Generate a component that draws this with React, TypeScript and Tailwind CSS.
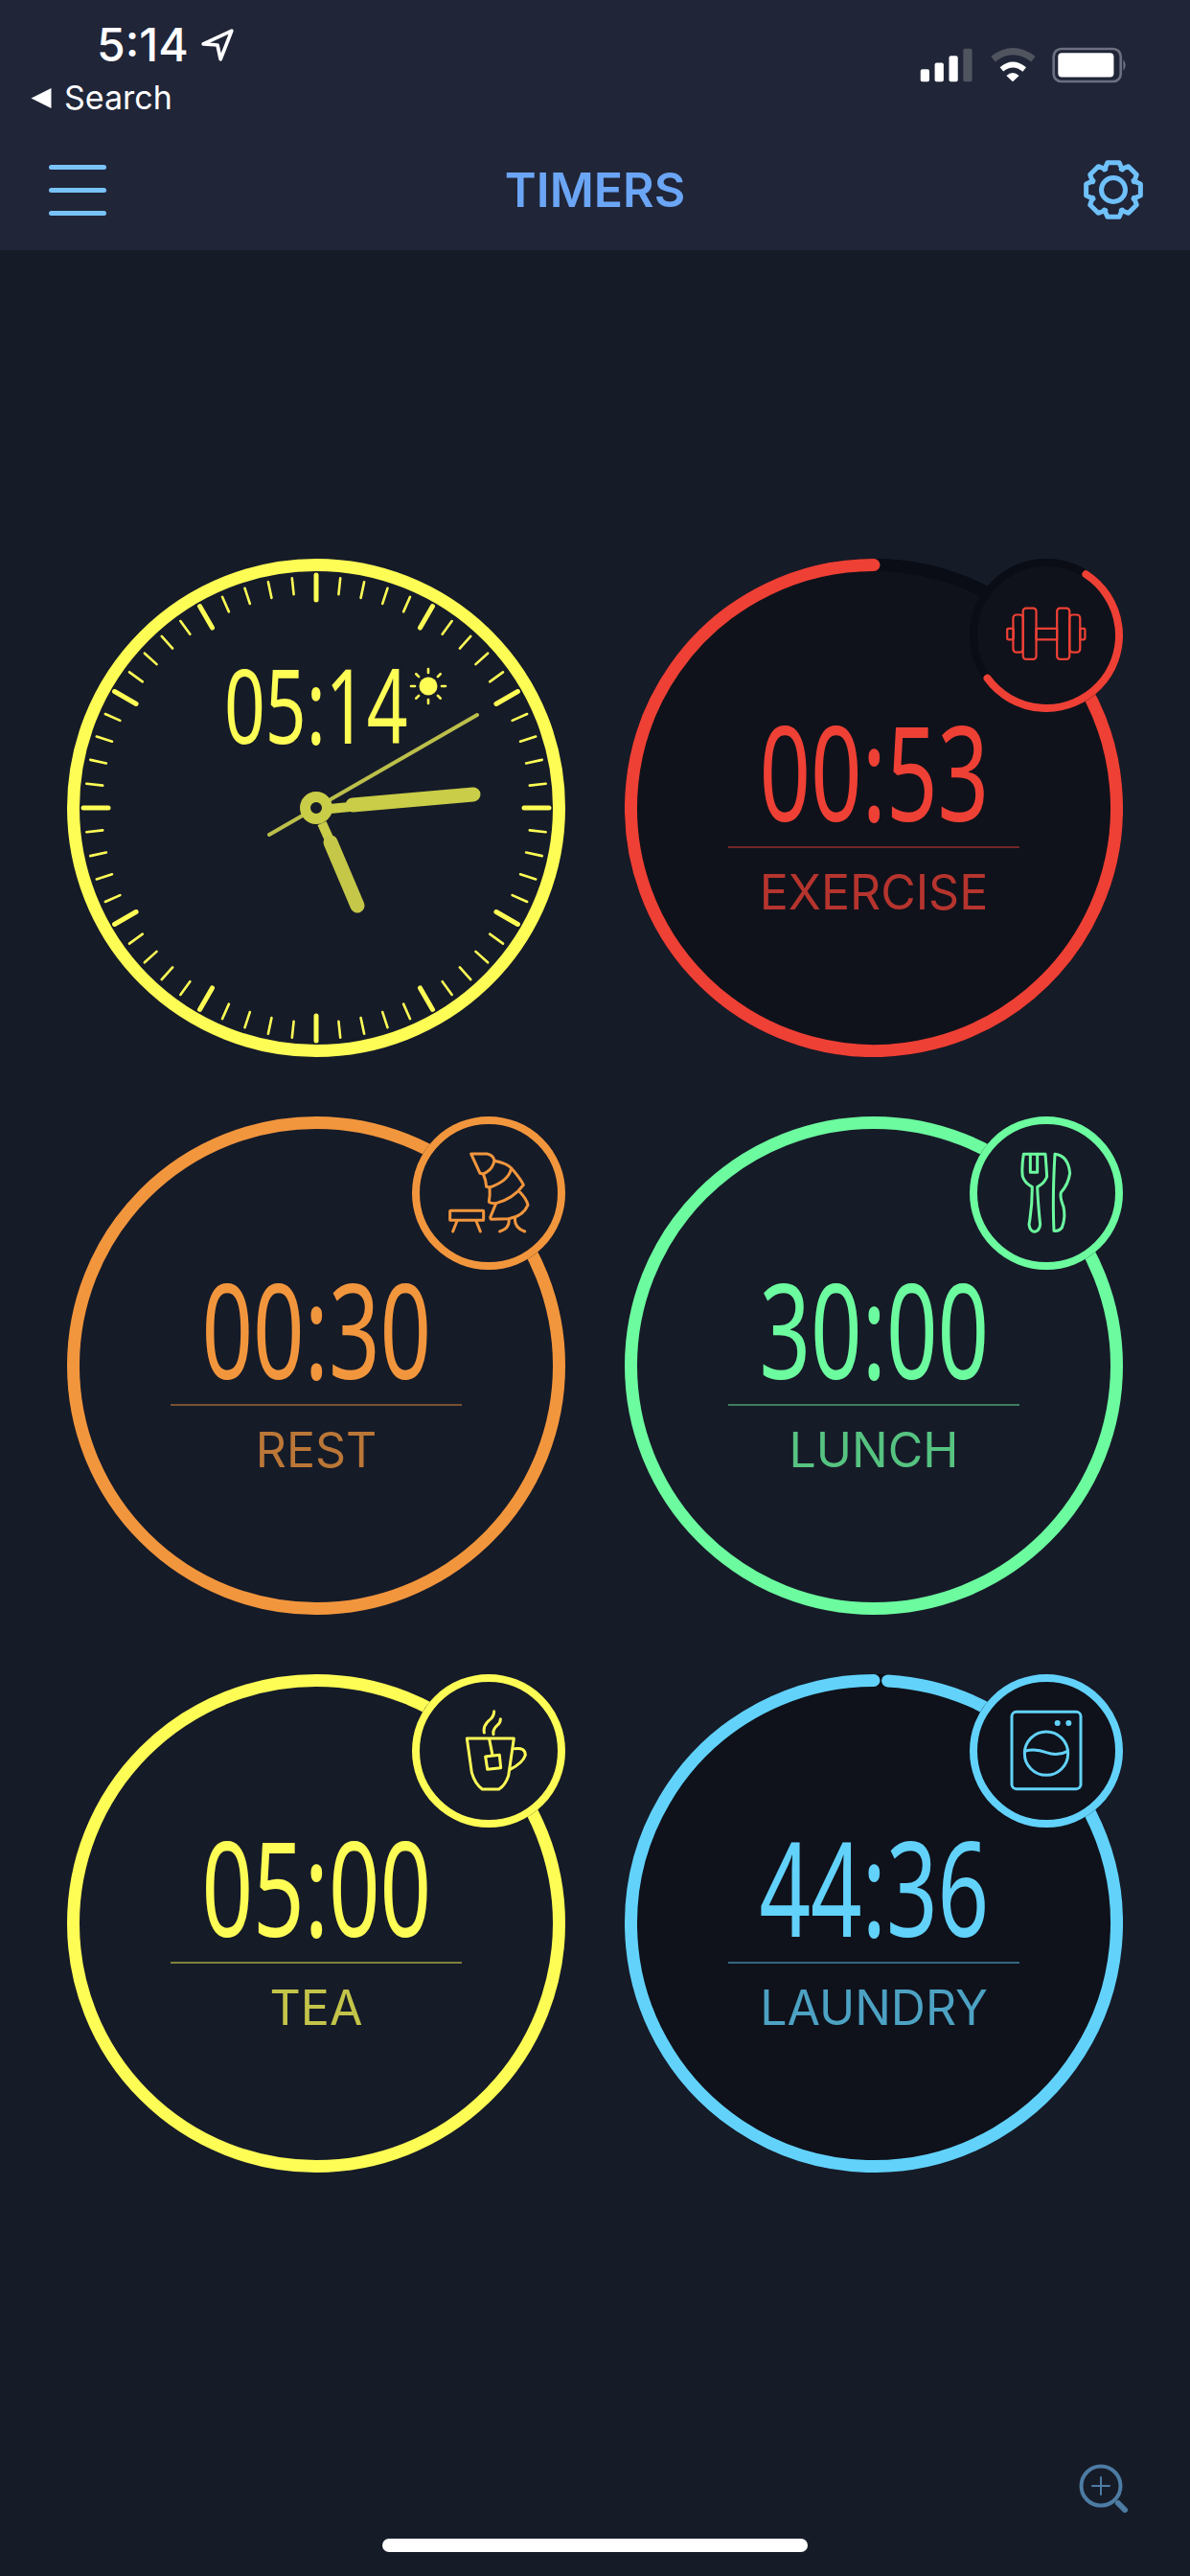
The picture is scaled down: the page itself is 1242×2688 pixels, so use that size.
import React from 'react';

const SIZE = 520;
const C = SIZE / 2;
const STROKE = 13;
const R = C - STROKE / 2;

const digitFont = { fontFamily: '"Noto Sans", sans-serif' };

const timers = [
  { label: 'EXERCISE', time: '00:53', color: '#ee4035', icon: 'dumbbell', arc: [30, 360], badgeArc: [33, 234], running: true },
  { label: 'REST', time: '00:30', color: '#f2963d', icon: 'rest' },
  { label: 'LUNCH', time: '30:00', color: '#6cfb9f', icon: 'lunch' },
  { label: 'TEA', time: '05:00', color: '#fdfd55', icon: 'tea' },
  { label: 'LAUNDRY', time: '44:36', color: '#62d2fb', icon: 'laundry', arc: [3.3, 360], running: true },
];

function arcPath(cx: number, cy: number, r: number, start: number, end: number) {
  const pt = (deg: number) => {
    const a = ((deg - 90) * Math.PI) / 180;
    return `${cx + r * Math.cos(a)} ${cy + r * Math.sin(a)}`;
  };
  const large = end - start > 180 ? 1 : 0;
  return `M${pt(start)} A${r} ${r} 0 ${large} 1 ${pt(end)}`;
}

function Ring({ size, width, color, arc }: { size: number; width: number; color: string; arc?: number[] }) {
  const c = size / 2;
  const r = c - width / 2;
  return (
    <svg className="absolute inset-0" width={size} height={size} viewBox={`0 0 ${size} ${size}`} fill="none">
      {arc ? (
        <>
          <circle cx={c} cy={c} r={r} stroke="#0a0d15" strokeWidth={width} />
          <path d={arcPath(c, c, r, arc[0], arc[1])} stroke={color} strokeWidth={width} strokeLinecap="round" />
        </>
      ) : (
        <circle cx={c} cy={c} r={r} stroke={color} strokeWidth={width} />
      )}
    </svg>
  );
}

// icon paths are traced in crop coordinates, hence the odd viewBoxes
function BadgeIcon({ name }: { name: string }) {
  const common = { className: 'absolute inset-0', width: 160, height: 160, fill: 'none', stroke: 'currentColor', strokeLinejoin: 'round' as const, strokeLinecap: 'round' as const };
  if (name === 'dumbbell') {
    return (
      <svg {...common} viewBox="1080 38 465 465" strokeWidth={6.5}>
        <rect x="1194" y="250" width="19" height="33" rx="3" />
        <rect x="1212" y="208" width="30" height="114" rx="10" />
        <rect x="1242" y="188" width="40" height="155" rx="9" />
        <rect x="1282" y="250" width="63" height="33" />
        <rect x="1345" y="188" width="38" height="155" rx="9" />
        <rect x="1383" y="208" width="32" height="114" rx="10" />
        <rect x="1415" y="250" width="15" height="33" rx="3" />
      </svg>
    );
  }
  if (name === 'rest') {
    return (
      <svg {...common} viewBox="27 48 480 480" strokeWidth={9}>
        <path d="M212 165 L262 165 Q280 168 285 185 Q280 215 250 228 L240 226 Z" />
        <path d="M285 187 Q325 195 338 210 Q330 250 270 270 L260 268 Q258 245 250 228" />
        <path d="M338 210 Q365 240 376 262 Q345 305 290 320 Q270 320 268 315 Q272 295 270 270" />
        <path d="M365 285 Q385 305 390 325 Q375 360 330 368 L275 370 Q272 368 272 364 L290 320" />
        <path d="M330 368 Q335 398 302 408 M350 365 Q345 395 380 408" />
        <rect x="146" y="343" width="105" height="30" rx="2" />
        <path d="M168 375 L155 408 M228 375 L241 408" />
      </svg>
    );
  }
  if (name === 'lunch') {
    return (
      <svg {...common} viewBox="36 47 480 480" strokeWidth={9}>
        <path d="M205 165 Q198 210 202 235 Q208 255 232 268 Q232 330 222 385 Q225 408 240 408 Q255 405 257 385 Q250 320 248 268 Q272 255 278 235 Q276 200 273 165 Z" />
        <path d="M226 165 V222 H248 V165" />
        <path d="M303 165 Q345 170 350 225 Q345 260 322 285 Q318 300 330 330 Q337 365 325 395 Q315 408 300 405 Q295 300 303 165 Z" />
      </svg>
    );
  }
  if (name === 'tea') {
    return (
      <svg {...common} viewBox="28 52 480 480" strokeWidth={9}>
        <path d="M200 253 H347 L330 370 Q320 400 300 412 H248 Q225 395 215 360 Z" />
        <path d="M350 285 Q382 280 383 305 Q375 330 335 350" />
        <path d="M270 255 L280 305" />
        <path d="M258 310 L302 305 L306 345 L264 350 Z" />
        <path d="M285 168 Q285 185 268 198 Q250 215 254 235 M305 192 Q305 205 295 212 Q280 225 283 240" />
      </svg>
    );
  }
  return (
    <svg {...common} viewBox="335 52 480 480" strokeWidth={9}>
      <rect x="467" y="170" width="216" height="241" rx="14" />
      <circle cx="610" cy="205" r="9" fill="currentColor" stroke="none" />
      <circle cx="645" cy="205" r="9" fill="currentColor" stroke="none" />
      <circle cx="575" cy="300" r="68" />
      <path d="M507 293 Q540 283 575 297 Q610 310 642 293" />
    </svg>
  );
}

function Timer({ t }: { t: (typeof timers)[number] }) {
  return (
    <div className={`relative h-[520px] w-[520px] rounded-full ${t.running ? 'bg-[#0f121b]' : ''}`} style={{ color: t.color }}>
      <Ring size={SIZE} width={STROKE} color={t.color} arc={t.arc} />
      <div className="relative flex flex-col items-center pt-[155px]">
        <div className="h-[130px] origin-center scale-x-[0.68] text-[138px] leading-[130px] font-[430]" style={digitFont}>
          {t.time}
        </div>
        <div className="mt-[15px] h-[2px] w-[304px] bg-current opacity-45" />
        <div className="mt-[16px] font-['Inter',sans-serif] text-[50px] leading-[60px] opacity-75">{t.label}</div>
      </div>
      <div className={`absolute top-0 right-0 h-[160px] w-[160px] rounded-full ${t.running ? 'bg-[#0f121b]' : 'bg-[#161b28]'}`}>
        <Ring size={160} width={8} color={t.color} arc={t.badgeArc} />
        <BadgeIcon name={t.icon} />
      </div>
    </div>
  );
}

function Clock() {
  const yellow = '#fdfd55';
  const hand = '#c9cd47';
  const ticks = Array.from({ length: 60 }, (_, i) => i);
  return (
    <div className="relative h-[520px] w-[520px]">
      <svg className="absolute inset-0" width={SIZE} height={SIZE} viewBox="-260 -260 520 520" fill="none" strokeLinecap="round">
        <circle cx="0" cy="0" r={R} stroke={yellow} strokeWidth={STROKE} />
        {ticks.map((i) => {
          const major = i % 5 === 0;
          const a = (i * 6 * Math.PI) / 180;
          const r1 = major ? 243 : 241;
          const r2 = major ? 217 : 224;
          return (
            <line
              key={i}
              x1={r1 * Math.sin(a)}
              y1={-r1 * Math.cos(a)}
              x2={r2 * Math.sin(a)}
              y2={-r2 * Math.cos(a)}
              stroke={yellow}
              strokeWidth={major ? 5 : 2.6}
            />
          );
        })}
        {/* sun */}
        <circle cx="117" cy="-127" r="9.5" fill={yellow} />
        {[0, 45, 90, 135, 180, 225, 270, 315].map((d) => {
          const a = (d * Math.PI) / 180;
          return (
            <line
              key={d}
              x1={117 + 14 * Math.sin(a)}
              y1={-127 - 14 * Math.cos(a)}
              x2={117 + 18 * Math.sin(a)}
              y2={-127 - 18 * Math.cos(a)}
              stroke={yellow}
              strokeWidth={2.6}
            />
          );
        })}
        {/* hands */}
        <line x1="4" y1="2" x2="35" y2="-1" stroke={hand} strokeWidth={10} strokeLinecap="butt" />
        <line x1="38" y1="-3" x2="164" y2="-14" stroke={hand} strokeWidth={15} />
        <line x1="6" y1="16" x2="15" y2="36" stroke={hand} strokeWidth={10} strokeLinecap="butt" />
        <line x1="15" y1="36" x2="43" y2="102" stroke="#c4c747" strokeWidth={15} />
        <line x1="-49" y1="28" x2="168" y2="-97" stroke="#bcbf4a" strokeWidth={4} />
        <circle cx="0" cy="0" r="11.5" stroke={hand} strokeWidth={11} fill="#161b28" />
      </svg>
      <div className="relative flex justify-center pt-[98px]">
        <div className="h-[108px] origin-center scale-x-[0.7] text-[107px] leading-[108px] font-[430] text-[#fdfd55]" style={digitFont}>
          05:14
        </div>
      </div>
    </div>
  );
}

function Gear() {
  // eight flat teeth round a hub
  const pts: string[] = [];
  for (let i = 0; i < 8; i++) {
    const a = (i * 45 * Math.PI) / 180;
    const p = (r: number, off: number) => {
      const b = a + (off * Math.PI) / 180;
      return `${31 + r * Math.sin(b)} ${31 - r * Math.cos(b)}`;
    };
    pts.push(p(23, -24), p(29, -12), p(29, 12), p(23, 24));
  }
  return (
    <svg width="62" height="62" viewBox="0 0 62 62" fill="none" stroke="#70c1fa" strokeWidth="5" strokeLinejoin="round">
      <path d={`M${pts.join(' L')} Z`} />
      <circle cx="31" cy="31" r="12.5" />
    </svg>
  );
}

function StatusIcons() {
  return (
    <div className="flex items-center gap-[15px]">
      <svg width="58" height="38" viewBox="50 55 175 115">
        <rect x="55" y="125" width="28" height="40" rx="6" fill="#fff" />
        <rect x="100" y="105" width="28" height="60" rx="6" fill="#fff" />
        <rect x="145" y="83" width="28" height="82" rx="6" fill="#fff" />
        <rect x="190" y="60" width="28" height="105" rx="6" fill="#50545f" />
      </svg>
      <svg width="50" height="38" viewBox="270 55 150 115" fill="none">
        <path d="M283 93 Q345 45 410 93" stroke="#50545f" strokeWidth="22" />
        <path d="M310 126 Q345 96 382 126" stroke="#fff" strokeWidth="17" />
        <path d="M325 146 Q345 128 365 146 L345 165 Z" fill="#fff" />
      </svg>
      <svg width="81" height="38" viewBox="470 55 245 115" fill="none">
        <rect x="478" y="61" width="212" height="103" rx="24" stroke="#6c7080" strokeWidth="8" />
        <rect x="492" y="74" width="176" height="76" rx="12" fill="#fff" />
        <path d="M698 94 Q712 112 698 130 Z" fill="#6c7080" />
      </svg>
    </div>
  );
}

export default function App() {
  return (
    <div className="relative flex h-[2688px] w-[1242px] flex-col overflow-hidden bg-[#161b28] font-['Inter',sans-serif]">
      <header className="flex h-[261px] flex-col bg-[#202538]">
        <div className="flex h-[132px] items-start justify-between pr-[64px] pl-[32px]">
          <div className="flex flex-col pt-[20px]">
            <div className="flex items-center pl-[69px] text-white">
              <span className="text-[48px] leading-[54px] font-medium">5:14</span>
              <svg className="ml-[12px]" width="36" height="36" viewBox="0 0 34 34" fill="none" stroke="#fff" strokeWidth="3.5" strokeLinejoin="round">
                <path d="M3 16 L31 3 L20 31 L17 17 Z" />
              </svg>
            </div>
            <div className="mt-[8px] flex items-center gap-[13px] text-white">
              <svg width="22" height="21" viewBox="0 0 21 21">
                <path d="M0 10.5 L21 0 V21 Z" fill="#fff" />
              </svg>
              <span className="text-[34px] leading-[40px]">Search</span>
            </div>
          </div>
          <div className="pt-[49px]">
            <StatusIcons />
          </div>
        </div>
        <div className="mt-[35px] flex items-center justify-between pr-[49px] pl-[51px]">
          <div className="flex w-[60px] flex-col gap-[19px]">
            <div className="h-[5px] rounded-full bg-[#79c3f9]" />
            <div className="h-[5px] rounded-full bg-[#79c3f9]" />
            <div className="h-[5px] rounded-full bg-[#79c3f9]" />
          </div>
          <div className="text-[50px] leading-[60px] font-semibold text-[#6ba5f5]">TIMERS</div>
          <Gear />
        </div>
      </header>
      <main className="grid grid-cols-[520px_520px] gap-[62px] pt-[322px] pl-[70px]">
        <Clock />
        {timers.map((t) => (
          <Timer key={t.label} t={t} />
        ))}
      </main>
      <div className="mt-auto flex flex-col items-center pb-[25px]">
        <div className="flex w-full justify-end pr-[62px]">
          <svg width="54" height="54" viewBox="0 0 54 54" fill="none" stroke="#4d7ca3" strokeLinecap="round">
            <circle cx="23" cy="23" r="20.5" strokeWidth="4" />
            <path d="M23 14 V32 M14 23 H32" strokeWidth="2" />
            <path d="M41 41 L48 48" strokeWidth="6" />
          </svg>
        </div>
        <div className="mt-[24px] h-[14px] w-[444px] rounded-full bg-white" />
      </div>
    </div>
  );
}
